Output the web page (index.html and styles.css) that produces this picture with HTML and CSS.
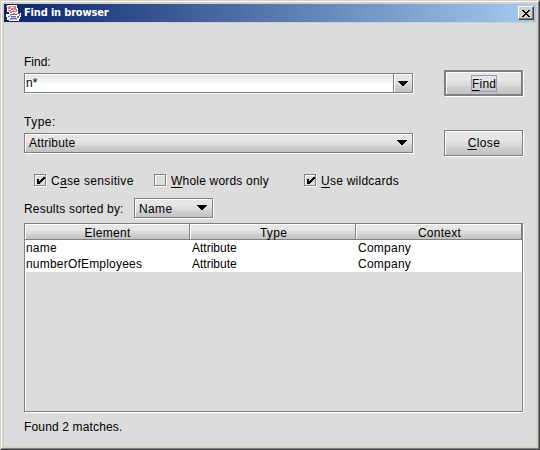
FILE: index.html
```html
<!DOCTYPE html>
<html lang="en">
<head>
<meta charset="utf-8">
<title>Find in browser</title>
<link rel="stylesheet" href="styles.css">
</head>
<body>
<div class="window">
  <div class="frame">
    <header class="titlebar">
      <svg class="logo" width="16" height="16" viewBox="0 0 16 16" shape-rendering="crispEdges">
        <path fill="#fff" d="M1 0h10v3h1v5h3v4h-1v2h-1v2H3v-1H1v-3H0V9h3V7H1V2H0V1h1z"/>
        <path fill="#e66b72" d="M3 1h2v1H3zM6 1h4v1H6zM2 2h2v2H2zM5 3h2v2H5zM8 2h2v3H8zM2 5h3v1H2zM6 6h4v1H6zM10 4h1v3h-1zM4 7h2v1H4zM7 8h2v1H7z"/>
        <path fill="#f6b6b8" d="M4 2h1v2H4zM7 3h1v3H7zM3 6h3v1H3z"/>
        <path fill="#686cae" d="M4 9h7v1H4zM11 8h3v1h-3zM13 9h1v2h-1zM5 11h5v1H5zM11 11h2v1h-2zM2 11h2v1H2zM4 13h7v1H4zM11 12h2v1h-2z"/>
        <path fill="#b9bbdc" d="M3 10h2v1H3zM5 12h5v1H5zM3 14h8v1H3z"/>
      </svg>
      <h1 class="title">Find in browser</h1>
      <button class="x" aria-label="Close window"><svg width="8" height="7" viewBox="0 0 8 7" shape-rendering="crispEdges"><path d="M0 0h2v1h1v1h2V1h1V0h2v1H7v1H6v1H5v1h1v1h1v1h1v1H6V6H5V5H3v1H2v1H0V6h1V5h1V4h1V3H2V2H1V1H0z"/></svg></button>
    </header>
    <main class="content">
      <section class="top">
        <div class="fields">
          <div class="label find-label">Find:</div>
          <div class="combo edit metal"><span class="text">n*</span><span class="drop"><svg class="arrow" width="10" height="5" viewBox="0 0 10 5" shape-rendering="crispEdges"><path d="M0 0h10v1H9v1H8v1H7v1H6v1H4V4H3V3H2V2H1V1H0z"/></svg></span></div>
          <div class="label type-label">Type:</div>
          <div class="combo metal raised"><span class="text">Attribute</span><svg class="arrow" width="10" height="5" viewBox="0 0 10 5" shape-rendering="crispEdges"><path d="M0 0h10v1H9v1H8v1H7v1H6v1H4V4H3V3H2V2H1V1H0z"/></svg></div>
        </div>
        <div class="buttons">
          <button class="btn default raised"><span class="focus"><u>F</u>ind</span></button>
          <button class="btn metal raised"><span><u>C</u>lose</span></button>
        </div>
      </section>
      <section class="checks">
        <label class="check"><span class="box metal"><svg width="8" height="7" viewBox="0 0 8 7" shape-rendering="crispEdges"><path d="M0 2h2v2h1V3h1V2h1V1h1V0h2v2H7v1H6v1H5v1H4v1H3v1H0z"/></svg></span><span class="t-case">C<u>a</u>se sensitive</span></label>
        <label class="check"><span class="box metal"></span><span><u>W</u>hole words only</span></label>
        <label class="check"><span class="box metal"><svg width="8" height="7" viewBox="0 0 8 7" shape-rendering="crispEdges"><path d="M0 2h2v2h1V3h1V2h1V1h1V0h2v2H7v1H6v1H5v1H4v1H3v1H0z"/></svg></span><span class="t-wild"><u>U</u>se wildcards</span></label>
      </section>
      <section class="sort">
        <span class="t-sort">Results sorted by:</span>
        <div class="combo small metal raised"><span class="text">Name</span><svg class="arrow" width="10" height="5" viewBox="0 0 10 5" shape-rendering="crispEdges"><path d="M0 0h10v1H9v1H8v1H7v1H6v1H4V4H3V3H2V2H1V1H0z"/></svg></div>
      </section>
      <div class="results metal">
        <div class="row head"><span>Element</span><span>Type</span><span>Context</span></div>
        <div class="row"><span>name</span><span>Attribute</span><span>Company</span></div>
        <div class="row"><span>numberOfEmployees</span><span>Attribute</span><span>Company</span></div>
      </div>
      <div class="status">Found 2 matches.</div>
    </main>
  </div>
</div>
</body>
</html>
```
FILE: styles.css
```css
* { box-sizing: border-box; }
body {
  margin: 0;
  font: 12px/16px "Liberation Sans", Arial, sans-serif;
  letter-spacing: 0.2px;
  color: #000;
}
.window {
  width: 540px;
  height: 450px;
  border: 1px solid;
  border-color: #d4d0c8 #404040 #404040 #d4d0c8;
}
.frame {
  height: 448px;
  border: 1px solid;
  border-color: #fff #808080 #808080 #fff;
  background: #d4d0c8;
  padding: 2px;
}
.titlebar {
  display: flex;
  align-items: center;
  height: 18px;
  padding: 0 2px;
  background: linear-gradient(90deg, #0a246a, #a6caf0);
}
.logo { display: block; }
.title {
  margin: 0 auto 0 2px;
  font: bold 11px/16px "DejaVu Sans Condensed", "DejaVu Sans", sans-serif;
  font-stretch: condensed;
  letter-spacing: -0.17px;
  color: #fff;
}
.x {
  display: flex;
  align-items: center;
  justify-content: center;
  width: 16px;
  height: 14px;
  padding: 0 1px 0 0;
  border: 1px solid;
  border-color: #fff #404040 #404040 #fff;
  box-shadow: inset -1px -1px #808080;
  background: #d4d0c8;
}
.content {
  height: 423px;
  margin-top: 1px;
  padding: 31px 13px 0 20px;
  background: #dcdcdc;
}
.metal {
  border: 1px solid #808080;
  box-shadow: inset 1px 1px #fff, 1px 1px #fff;
}
.raised {
  background: linear-gradient(#e6e6e6 0 35%, #dcdcdc 50% 58%, #d0d0d0 68%, #c2c2c2);
}
.top { display: flex; justify-content: space-between; width: 499px; height: 99px; }
.fields { width: 389px; }
.label { height: 16px; }
.find-label { margin-bottom: 3px; letter-spacing: 0; }
.type-label { margin: 21px 0 3px; letter-spacing: 0.5px; }
.combo {
  display: flex;
  align-items: center;
  justify-content: space-between;
  height: 20px;
  padding: 0 5px 0 4px;
}
.combo .arrow { margin-top: -1px; }
.combo .text { margin-top: -1px; }
.edit {
  padding: 0 0 0 1px;
  background: linear-gradient(#e6e6e6 0 4px, #f0f0f0 4px 7px, #f8f8f8 7px 9px, #fff 9px);
}
.edit .text { margin-top: 0; }
.drop {
  display: flex;
  align-items: center;
  justify-content: center;
  width: 19px;
  height: 18px;
  border-left: 1px solid #808080;
  box-shadow: inset 1px 1px #fff;
  background: linear-gradient(#e6e6e6 0 35%, #dcdcdc 50% 58%, #d0d0d0 68%, #c2c2c2);
}
.drop .arrow { margin-top: 0; }
.buttons { padding-top: 16px; display: flex; flex-direction: column; gap: 34px; }
.btn {
  display: flex;
  flex: none;
  align-items: center;
  justify-content: center;
  width: 79px;
  height: 26px;
  padding: 0 0 0 1px;
  font: inherit;
  letter-spacing: 0.4px;
  color: #000;
}
.default { border: 2px solid #808080; box-shadow: inset 1px 1px #fff, 1px 1px #fff; }
.focus {
  width: 26px;
  height: 17px;
  border: 1px solid #9999b8;
  line-height: 16px;
  text-align: center;
  letter-spacing: 0.2px;
}
u { text-decoration: underline; text-decoration-thickness: 1px; text-underline-offset: 2px; text-decoration-skip-ink: none; }
.checks {
  display: grid;
  grid-template-columns: 120px 150px 150px;
  height: 16px;
  margin: 19px 0 0 10px;
}
.check { display: flex; align-items: center; gap: 5px; height: 16px; white-space: nowrap; }
.check span + span { margin-top: 2px; }
.t-case { letter-spacing: 0.33px; }
.t-wild { letter-spacing: 0.25px; }
.box { display: flex; width: 12px; height: 12px; padding: 2px 0 0 2px; margin-top: -1px; }
.sort { display: flex; align-items: center; height: 20px; margin-top: 10px; }
.t-sort { width: 110px; white-space: nowrap; margin-top: 1px; }
.small { width: 79px; }
.small .text { margin-top: 1px; letter-spacing: 0.35px; }
.results { width: 499px; height: 189px; margin-top: 5px; }
.row {
  display: grid;
  grid-template-columns: 165px 166px 166px;
  height: 16px;
  background: #fff;
}
.row span { padding-left: 1px; }
.row span + span { padding-left: 2px; letter-spacing: 0; }
.row span + span + span { letter-spacing: 0.25px; }
.head span, .head span + span {
  height: 16px;
  padding-top: 1px;
  text-align: center;
  letter-spacing: 0.3px;
  border-right: 1px solid #808080;
  border-bottom: 1px solid #808080;
  box-shadow: inset 1px 1px #fff;
  background: linear-gradient(#e6e6e6 0 35%, #dcdcdc 50% 58%, #d0d0d0 68%, #c2c2c2);
}
.status { margin-top: 7px; letter-spacing: 0.15px; }
```
